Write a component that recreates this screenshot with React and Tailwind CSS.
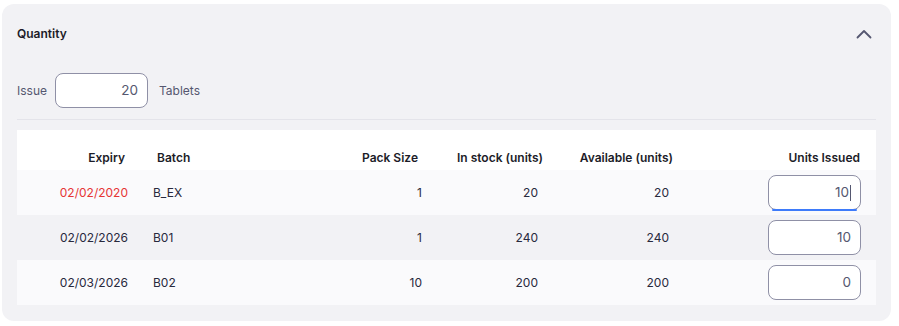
import React from "react";

const rows = [
  { expiry: "02/02/2020", batch: "B_EX", pack: 1, stock: 20, available: 20, issued: "10", expired: true, focused: true },
  { expiry: "02/02/2026", batch: "B01", pack: 1, stock: 240, available: 240, issued: "10" },
  { expiry: "02/03/2026", batch: "B02", pack: 10, stock: 200, available: 200, issued: "0" },
];

const NumberBox = ({ value, focused, className }) => (
  <div
    className={`relative flex items-center justify-end rounded-[8px] border border-[#8f90a6] bg-white pr-[9px] text-[13.5px] text-[#555770] ${className}`}
  >
    <span>{value}</span>
    {focused && <span className="ml-[1px] h-[16px] w-[1px] bg-[#555770]" />}
    {focused && (
      <span className="absolute -bottom-[2px] left-[3px] right-[3px] h-[2px] rounded-full bg-[#3e7bfa]" />
    )}
  </div>
);

const App = () => {
  return (
    <div className="h-[326px] w-[899px] bg-white pl-[2px] pt-[4px] font-['Inter',sans-serif] text-[12px] text-[#1c1c28]">
      <div className="w-[889px] rounded-[12px] bg-[#f2f2f5] px-[15px] pb-[16px]">
        {/* Header */}
        <div className="flex h-[60px] items-center justify-between">
          <h2 className="text-[12px] font-semibold">Quantity</h2>
          <svg width="16" height="10" viewBox="0 0 16 10" fill="none" className="mr-[4px]">
            <path d="M1.5 8.5 8 2l6.5 6.5" stroke="#555770" strokeWidth="1.8" strokeLinecap="round" strokeLinejoin="round" />
          </svg>
        </div>

        {/* Issue row */}
        <div className="mt-[9px] flex items-center">
          <span className="text-[#555770]">Issue</span>
          <NumberBox value="20" className="ml-[8px] h-[35px] w-[93px]" />
          <span className="ml-[11px] text-[#555770]">Tablets</span>
        </div>

        <div className="mt-[11px] h-px bg-[#e4e4ea]" />

        {/* Table */}
        <div className="mt-[10px] bg-white">
          <div className="flex h-[40px] items-end pb-[3px] font-semibold">
            <div className="w-[123px] pr-[15px] text-right">Expiry</div>
            <div className="w-[160px] pl-[17px]">Batch</div>
            <div className="w-[135px] pr-[17px] text-right">Pack Size</div>
            <div className="w-[125px] pr-[17px] text-right">In stock (units)</div>
            <div className="w-[130px] pr-[17px] text-right">Available (units)</div>
            <div className="flex-1 pr-[16px] text-right">Units Issued</div>
          </div>
          {rows.map((row, i) => (
            <div
              key={i}
              className={`flex h-[45px] items-center text-[#28293d] ${i % 2 === 1 ? "bg-[#f2f2f5]" : "bg-[#fafafc]"}`}
            >
              <div className={`w-[123px] pr-[12px] text-right ${row.expired ? "text-[#e63535]" : ""}`}>
                {row.expiry}
              </div>
              <div className="w-[160px] pl-[13px]">{row.batch}</div>
              <div className="w-[135px] pr-[13px] text-right">{row.pack}</div>
              <div className="w-[125px] pr-[22px] text-right">{row.stock}</div>
              <div className="w-[130px] pr-[21px] text-right">{row.available}</div>
              <div className="flex flex-1 justify-end pr-[15px]">
                <NumberBox value={row.issued} focused={row.focused} className="h-[35px] w-[93px]" />
              </div>
            </div>
          ))}
        </div>
      </div>
    </div>
  );
};

export default App;
